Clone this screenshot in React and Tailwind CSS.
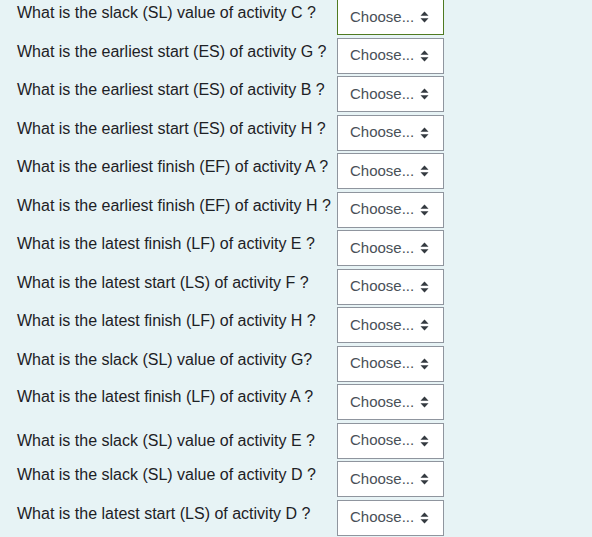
const QUESTIONS = [
  { q: "What is the slack (SL) value of activity C ?", pt: 5, focus: true },
  { q: "What is the earliest start (ES) of activity G ?", pt: 5 },
  { q: "What is the earliest start (ES) of activity B ?", pt: 5 },
  { q: "What is the earliest start (ES) of activity H ?", pt: 5 },
  { q: "What is the earliest finish (EF) of activity A ?", pt: 5 },
  { q: "What is the earliest finish (EF) of activity H ?", pt: 5 },
  { q: "What is the latest finish (LF) of activity E ?", pt: 5 },
  { q: "What is the latest start (LS) of activity F ?", pt: 5 },
  { q: "What is the latest finish (LF) of activity H ?", pt: 5 },
  { q: "What is the slack (SL) value of activity G?", pt: 5 },
  { q: "What is the latest finish (LF) of activity A ?", pt: 4 },
  { q: "What is the slack (SL) value of activity E ?", pt: 9 },
  { q: "What is the slack (SL) value of activity D ?", pt: 5 },
  { q: "What is the latest start (LS) of activity D ?", pt: 5 },
];

function Arrows() {
  return (
    <svg width="9" height="12" viewBox="0 0 9 12" className="shrink-0">
      <path d="M4.5 0.5 L8.5 4.8 L0.5 4.8 Z" fill="#343a40" />
      <path d="M0.5 7.2 L8.5 7.2 L4.5 11.5 Z" fill="#343a40" />
    </svg>
  );
}

function Select({ focus }) {
  return (
    <div
      className={
        "w-[107px] h-[36px] bg-white border flex items-center justify-between pl-[12px] pr-[14px] text-[15px] text-[#495057] " +
        (focus ? "border-[#4f7a21]" : "border-[#8f959e]")
      }
    >
      <span>Choose...</span>
      <Arrows />
    </div>
  );
}

export default function App() {
  return (
    <div
      className="w-[592px] h-[537px] overflow-hidden bg-[#e7f3f5]"
      style={{ fontFamily: '"Liberation Sans", Arial, sans-serif' }}
    >
      <div className="mt-[-1px] pl-[17px] flex flex-col gap-[2.5px]">
        {QUESTIONS.map((r, i) => (
          <div key={i} className="flex items-start">
            <div
              className="w-[320px] text-[16px] text-[#1d2125] leading-[18px] whitespace-nowrap"
              style={{ paddingTop: r.pt }}
            >
              {r.q}
            </div>
            <Select focus={r.focus} />
          </div>
        ))}
      </div>
    </div>
  );
}
